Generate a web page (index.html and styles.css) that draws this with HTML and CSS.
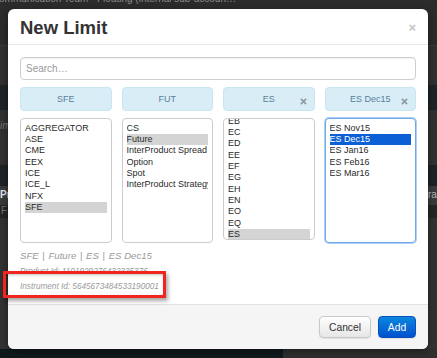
FILE: index.html
```html
<!DOCTYPE html>
<html>
<head>
<meta charset="utf-8">
<link rel="stylesheet" href="styles.css">
</head>
<body>
<div class="backdrop">
  <div class="band band-top"><span class="bg-text t1">ommunication Team</span><span class="bg-text t2">Floating (internal sub-accoun…</span></div>
  <div class="band b-a"></div>
  <div class="band b-dark b-b"></div>
  <div class="band b-c"><span class="bg-text t3">im</span></div>
  <div class="band b-dark b-d"></div>
  <div class="band b-e"><span class="bg-strong">Pr</span><span class="bg-strong right">ra</span></div>
  <div class="band b-f"><span class="bg-text t4">F</span></div>
  <div class="band b-g"></div>
  <div class="band b-bottom"><div class="navy"></div></div>
</div>

<div class="modal">
  <div class="modal-header">
    <h3 class="title">New Limit</h3>
    <span class="close">×</span>
  </div>
  <div class="modal-body">
    <div class="search">Search…</div>
    <div class="tags">
      <div class="tag">SFE</div>
      <div class="tag">FUT</div>
      <div class="tag">ES<svg class="x" viewBox="0 0 8 8"><path d="M1 1L7 7M7 1L1 7"/></svg></div>
      <div class="tag">ES Dec15<svg class="x" viewBox="0 0 8 8"><path d="M1 1L7 7M7 1L1 7"/></svg></div>
    </div>
    <div class="lists">
      <div class="list">
        <div class="opt">AGGREGATOR</div>
        <div class="opt">ASE</div>
        <div class="opt">CME</div>
        <div class="opt">EEX</div>
        <div class="opt">ICE</div>
        <div class="opt">ICE_L</div>
        <div class="opt">NFX</div>
        <div class="opt sel">SFE</div>
      </div>
      <div class="list">
        <div class="opt">CS</div>
        <div class="opt sel">Future</div>
        <div class="opt">InterProduct Spread</div>
        <div class="opt">Option</div>
        <div class="opt">Spot</div>
        <div class="opt">InterProduct Strategy</div>
      </div>
      <div class="list scrolled">
        <div class="scroll-inner">
          <div class="opt">EB</div>
          <div class="opt">EC</div>
          <div class="opt">ED</div>
          <div class="opt">EE</div>
          <div class="opt">EF</div>
          <div class="opt">EG</div>
          <div class="opt">EH</div>
          <div class="opt">EN</div>
          <div class="opt">EO</div>
          <div class="opt">EQ</div>
          <div class="opt sel">ES</div>
        </div>
      </div>
      <div class="list focused">
        <div class="opt">ES Nov15</div>
        <div class="opt active">ES Dec15</div>
        <div class="opt">ES Jan16</div>
        <div class="opt">ES Feb16</div>
        <div class="opt">ES Mar16</div>
      </div>
    </div>
    <div class="info">
      <div class="path">SFE <span class="sep">|</span> Future <span class="sep">|</span> ES <span class="sep">|</span> ES Dec15</div>
      <div class="id">Product Id: 1101929276432335376</div>
      <div class="id">Instrument Id: 5645673484533190001</div>
    </div>
  </div>
  <div class="modal-footer">
    <button class="btn">Cancel</button>
    <button class="btn primary">Add</button>
  </div>
</div>

<div class="annotation"></div>
</body>
</html>
```

FILE: styles.css
```css
html, body {
  margin: 0;
  padding: 0;
}
body {
  width: 437px;
  height: 358px;
  overflow: hidden;
  background: #323232;
  font-family: "Liberation Sans", Arial, sans-serif;
  position: relative;
}

.backdrop {
  display: flex;
  flex-direction: column;
  height: 358px;
}
.band {
  position: relative;
  overflow: hidden;
  flex: none;
}
.band-top {
  height: 45px;
  background: #2c2c2c;
  border-bottom: 1px solid #3a3a3a;
}
.bg-text {
  position: absolute;
  color: #8a8a8a;
  font-size: 10px;
  white-space: nowrap;
}
.t1 { left: -1px; top: -7px; }
.t2 { left: 97px; top: -7px; }
.t3 { left: 0; top: 10px; color: #777; font-style: italic; }
.t4 { left: 1px; top: 0; color: #777; }
.b-a { height: 39px; background: #313131; }
.b-dark { background: #1d2427; }
.b-b { height: 25px; }
.b-c { height: 55px; background: #323232; }
.b-d { height: 21px; }
.b-e { height: 19px; background: #3b3b3b; }
.bg-strong {
  position: absolute;
  left: 0;
  top: 3px;
  color: #e8e8e8;
  font-size: 10px;
  font-weight: bold;
}
.bg-strong.right { left: 428px; font-weight: normal; color: #bbb; }
.b-f { height: 13px; background: #262626; }
.b-g { flex: 1; background: #333; }
.b-bottom { height: 9px; background: #2f2f2f; }
.navy { width: 283px; height: 9px; background: #0f1a1f; }

.modal {
  position: absolute;
  left: 8px;
  top: 9px;
  width: 420px;
  height: 340px;
  background: #fff;
  border-radius: 6px;
  box-shadow: 0 2px 8px rgba(0,0,0,.45);
  display: flex;
  flex-direction: column;
  overflow: hidden;
}

.modal-header {
  display: flex;
  justify-content: space-between;
  align-items: flex-start;
  padding: 8px 12px 5px 12px;
  border-bottom: 1px solid #e9e9e9;
}
.title {
  margin: 0;
  font-size: 18.5px;
  line-height: 22px;
  font-weight: bold;
  color: #333;
}
.close {
  font-size: 13px;
  line-height: 14px;
  margin-top: 4px;
  color: #c4c4c4;
  font-weight: bold;
}

.modal-body {
  flex: 1;
  padding: 12px 12px 0 12px;
  display: flex;
  flex-direction: column;
}

.search {
  height: 21px;
  border: 1px solid #cfcfcf;
  border-radius: 4px;
  padding-left: 5px;
  font-size: 10px;
  line-height: 21px;
  color: #999;
  box-shadow: inset 0 1px 1px rgba(0,0,0,.06);
}

.tags {
  margin-top: 7px;
  display: grid;
  grid-template-columns: repeat(4, 1fr);
  column-gap: 10px;
}
.tag {
  position: relative;
  height: 22px;
  border: 1px solid #c6e6f2;
  background: #d9edf7;
  border-radius: 4px;
  text-align: center;
  font-size: 9px;
  line-height: 22px;
  color: #587f99;
}
.tag .x {
  position: absolute;
  right: 7px;
  top: 10px;
  width: 7px;
  height: 7px;
  stroke: #8f9ba3;
  stroke-width: 1.9;
  fill: none;
}

.lists {
  margin-top: 7px;
  display: grid;
  grid-template-columns: repeat(4, 1fr);
  column-gap: 10px;
}
.list {
  height: 116px;
  border: 1px solid #cccccc;
  border-radius: 4px;
  padding: 3.5px 4px 3.5px 4px;
  overflow: hidden;
  background: #fff;
}
.opt {
  font-size: 9px;
  line-height: 11.35px;
  height: 11.35px;
  color: #2a2a2a;
  white-space: nowrap;
  overflow: hidden;
}
.opt.sel {
  background: #d4d4d4;
}
.opt.active {
  background: #0d5fd6;
  color: #fff;
}
.list.scrolled {
  padding-top: 0;
}
.scroll-inner {
  margin-top: -3.4px;
}
.list.focused {
  border-color: #6ea9ea;
  box-shadow: 0 0 0 1px rgba(110,169,234,.55);
}

.info {
  margin-top: 5px;
  color: #9a9a9a;
  font-style: italic;
}
.path {
  font-size: 9.6px;
  line-height: 15.5px;
}
.sep {
  font-style: normal;
  padding: 0 1px;
}
.id {
  font-size: 8.2px;
  line-height: 15.5px;
}

.modal-footer {
  display: flex;
  justify-content: flex-end;
  gap: 7px;
  padding: 11px 12px;
  background: #f5f5f5;
  border-top: 1px solid #e3e3e3;
}
.btn {
  height: 22px;
  padding: 0 9px;
  font-family: "Liberation Sans", Arial, sans-serif;
  font-size: 10.3px;
  border-radius: 4px;
  border: 1px solid #c8c8c8;
  background: linear-gradient(#ffffff, #e6e6e6);
  color: #333;
  box-shadow: 0 1px 1px rgba(0,0,0,.08);
}
.btn.primary {
  width: 38px;
  padding: 0;
  color: #fff;
  border-color: #0a4fbb;
  background: linear-gradient(#0a88dd, #0250cf);
}
.btn:first-child {
  width: 52px;
  padding: 0;
}

.annotation {
  position: absolute;
  left: 3px;
  top: 271px;
  width: 157px;
  height: 21px;
  border: 3.5px solid #f1241e;
  box-shadow: 2px 3px 4px rgba(0,0,0,.35), inset 1px 1px 3px rgba(0,0,0,.25);
}
```
